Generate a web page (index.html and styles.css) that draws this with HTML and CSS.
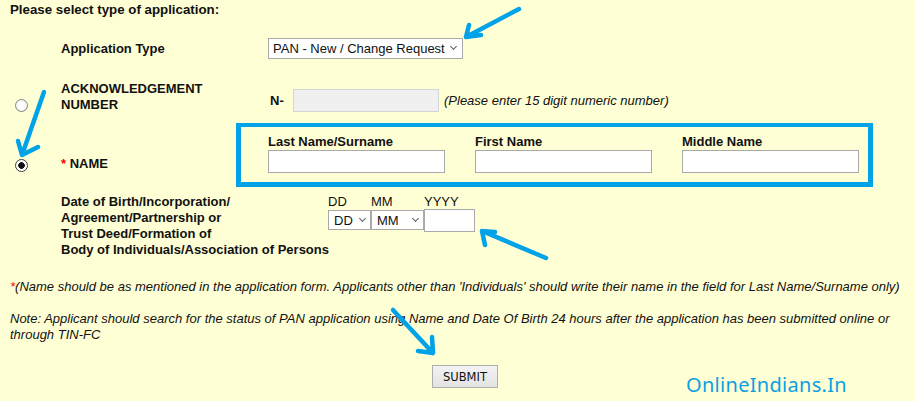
FILE: index.html
```html
<!DOCTYPE html>
<html>
<head>
<meta charset="utf-8">
<title>PAN status</title>
<link rel="stylesheet" href="styles.css">
</head>
<body>
<div class="page">
  <div class="title">Please select type of application:</div>

  <div class="row row-app">
    <div class="c-radio"></div>
    <div class="c-label">Application Type</div>
    <div class="c-field">
      <span class="sel sel-app"><select><option>PAN - New / Change Request</option></select></span>
    </div>
  </div>

  <div class="row row-ack">
    <div class="c-radio"><input type="radio" name="t" class="radio"></div>
    <div class="c-label">ACKNOWLEDGEMENT<br>NUMBER</div>
    <div class="c-field ack">
      <span class="nlabel">N-</span>
      <input class="ack-input" type="text">
      <span class="hint">(Please enter 15 digit numeric number)</span>
    </div>
  </div>

  <div class="row row-name">
    <div class="c-radio"><input type="radio" name="t" class="radio" checked></div>
    <div class="c-label name-label"><span class="req">*</span> NAME</div>
    <div class="name-box">
      <div class="name-col">
        <div class="name-cap">Last Name/Surname</div>
        <input class="name-input" type="text">
      </div>
      <div class="name-col">
        <div class="name-cap">First Name</div>
        <input class="name-input" type="text">
      </div>
      <div class="name-col">
        <div class="name-cap">Middle Name</div>
        <input class="name-input" type="text">
      </div>
    </div>
  </div>

  <div class="row row-dob">
    <div class="c-radio"></div>
    <div class="c-label dob-label">Date of Birth/Incorporation/<br>Agreement/Partnership or<br>Trust Deed/Formation of<br>Body of Individuals/Association of Persons</div>
    <div class="dob-field">
      <div class="dob-caps">
        <span class="cap-dd">DD</span><span class="cap-mm">MM</span><span>YYYY</span>
      </div>
      <div class="dob-inputs">
        <span class="sel sel-dd"><select><option>DD</option></select></span><span class="sel sel-mm"><select><option>MM</option></select></span><input class="yyyy" type="text">
      </div>
    </div>
  </div>

  <p class="note note1"><span class="req">*</span>(Name should be as mentioned in the application form. Applicants other than 'Individuals' should write their name in the field for Last Name/Surname only)</p>

  <p class="note note2">Note: Applicant should search for the status of PAN application using Name and Date Of Birth 24 hours after the application has been submitted online or through TIN-FC</p>

  <div class="submit-row"><button class="submit" type="button">SUBMIT</button></div>

  <div class="watermark">OnlineIndians.In</div>

  <svg class="arrows" width="915" height="401" viewBox="0 0 915 401" aria-hidden="true">
    <g fill="none" stroke="#00a2e8" stroke-width="4.5" stroke-linecap="round" stroke-linejoin="round">
      <path d="M519 9 L466 37 M466 37 L469 25 M466 37 L481 35"/>
      <path d="M44 92 L22 155 M22 155 L18 141 M22 155 L38 147"/>
      <path d="M546 258 L482 231 M482 231 L485 245 M482 231 L495 232"/>
      <path d="M393 310 L433 353 M433 353 L432 337 M433 353 L418 351"/>
    </g>
  </svg>
</div>
</body>
</html>
```

FILE: styles.css
```css
html, body {
  margin: 0;
  padding: 0;
  background: #ffffd5;
}

body {
  font-family: "Liberation Sans", Arial, sans-serif;
  font-size: 13px;
  color: #111111;
}

.page {
  position: relative;
  width: 915px;
  height: 401px;
  overflow: hidden;
}

.title {
  padding: 2px 0 0 10px;
  font-weight: bold;
  font-size: 13.3px;
  line-height: 16px;
}

.row {
  display: flex;
  align-items: flex-start;
}

.c-radio {
  width: 61px;
  flex: none;
  box-sizing: border-box;
  padding-left: 15px;
}

.c-label {
  width: 207px;
  flex: none;
  font-weight: bold;
  line-height: 16px;
}

.c-field {
  display: flex;
  align-items: center;
}

/* application type row */
.row-app {
  height: 60px;
  align-items: center;
}

.row-app .c-label {
  margin-top: 1px;
}

/* selects */
.sel {
  position: relative;
  display: inline-block;
  vertical-align: top;
}

.sel select {
  appearance: none;
  -webkit-appearance: none;
  display: block;
  box-sizing: border-box;
  margin: 0;
  border: 1px solid #a9a9a9;
  border-radius: 0;
  background: #ffffff;
  color: #111111;
  font-family: "Liberation Sans", Arial, sans-serif;
  padding: 0 16px 0 4px;
  outline: none;
}

.sel::after {
  content: "";
  position: absolute;
  right: 7px;
  top: 6px;
  width: 4px;
  height: 4px;
  border-right: 1.5px solid #606060;
  border-bottom: 1.5px solid #606060;
  transform: rotate(45deg);
  pointer-events: none;
}

.sel-app select {
  width: 195px;
  height: 21px;
  font-size: 13px;
}

/* acknowledgement row */
.row-ack {
  height: 40px;
}

.row-ack .c-radio {
  margin-top: 21px;
}

.row-ack .c-label {
  margin-top: 3px;
}

.ack {
  margin-top: 11px;
}

.nlabel {
  width: 25px;
  box-sizing: border-box;
  padding-left: 2px;
  font-weight: bold;
}

.ack-input {
  box-sizing: border-box;
  width: 146px;
  height: 23px;
  margin: 0;
  border: 1px solid #d4d4d4;
  background: #f0f0f0;
}

.hint {
  margin-left: 5px;
  font-style: italic;
}

/* radio */
.radio {
  appearance: none;
  -webkit-appearance: none;
  display: block;
  width: 13px;
  height: 13px;
  margin: 0;
  box-sizing: border-box;
  border-radius: 50%;
  border: 1px solid #858585;
  background: radial-gradient(circle at 50% 50%, #ffffff 0, #ffffff 40%, #e4e4e4 100%);
}

.radio:checked {
  border-color: #3a3a3a;
  background: radial-gradient(circle at 50% 50%, #111111 0, #111111 3px, #ffffff 3.6px, #ffffff 100%);
}

/* name row */
.row-name .c-radio {
  margin-top: 41px;
}

.name-label {
  width: 175px;
  margin-top: 38px;
}

.req {
  color: #ff0000;
}

.name-box {
  margin-top: 5px;
  box-sizing: border-box;
  width: 637px;
  height: 64px;
  border: 5px solid #00a2e8;
  border-top-width: 4px;
  padding: 6px 9px 0 27px;
  display: flex;
  gap: 30px;
}

.name-col {
  width: 177px;
  display: flex;
  flex-direction: column;
  gap: 0;
}

.name-cap {
  font-weight: bold;
  line-height: 17px;
}

.name-input {
  box-sizing: border-box;
  width: 177px;
  height: 23px;
  margin: 0;
  border: 1px solid #a9a9a9;
  background: #ffffff;
}

/* date of birth row */
.dob-label {
  width: 267px;
  margin-top: 7px;
  white-space: nowrap;
}

.dob-field {
  margin-top: 7px;
}

.dob-caps {
  display: flex;
  line-height: 15px;
}

.cap-dd {
  width: 43px;
}

.cap-mm {
  width: 53px;
}

.dob-inputs {
  display: flex;
  align-items: flex-start;
}

.sel-dd select,
.sel-mm select {
  height: 20px;
  margin-top: 1px;
  font-size: 13px;
  padding-left: 5px;
}

.sel-dd select {
  width: 43px;
}

.sel-mm select {
  width: 53px;
}

.sel-dd::after,
.sel-mm::after {
  top: 7px;
  right: 6px;
}

.yyyy {
  box-sizing: border-box;
  width: 51px;
  height: 23px;
  margin: 0;
  border: 1px solid #a9a9a9;
  background: #ffffff;
}

/* notes */
.note {
  margin: 0;
  padding-left: 10px;
  width: 905px;
  box-sizing: border-box;
  font-style: italic;
  line-height: 16px;
}

.note1 {
  margin-top: 21px;
}

.note2 {
  margin-top: 16px;
}

.submit-row {
  margin-top: 22px;
  padding-left: 432px;
}

.submit {
  box-sizing: border-box;
  width: 66px;
  height: 23px;
  margin: 0;
  padding: 0;
  border: 1px solid #adadad;
  border-radius: 0;
  background: linear-gradient(#f3f3f3, #e3e3e3);
  color: #111111;
  font-family: "DejaVu Sans", "Liberation Sans", sans-serif;
  font-size: 11.5px;
}

.watermark {
  position: absolute;
  left: 686px;
  top: 372px;
  font-family: "Noto Sans", "Open Sans", sans-serif;
  font-size: 20px;
  line-height: 26px;
  color: #0aa0e4;
  letter-spacing: 0.3px;
}

.arrows {
  position: absolute;
  left: 0;
  top: 0;
  pointer-events: none;
}
```
